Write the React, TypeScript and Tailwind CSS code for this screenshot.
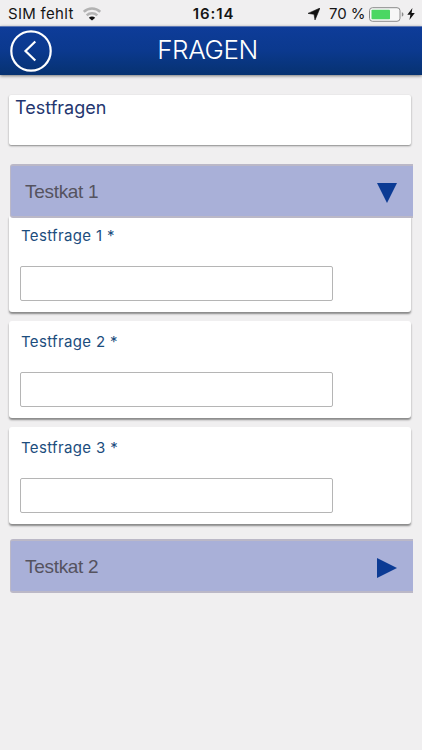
import React from 'react';

interface Question {
  id: number;
  label: string;
}

const QUESTIONS: Question[] = [
  { id: 1, label: 'Testfrage 1 *' },
  { id: 2, label: 'Testfrage 2 *' },
  { id: 3, label: 'Testfrage 3 *' },
];

const StatusBar: React.FC = () => (
  <div className="grid h-[26px] grid-cols-[1fr_auto_1fr] items-center pt-[2px] text-[15px] leading-[20px] text-[#151515]">
    <div className="flex items-center pl-2">
      <span className="w-[66px] whitespace-nowrap tracking-[0.3px]">SIM fehlt</span>
      <svg className="ml-[9px] h-[14px] w-[18px]" viewBox="0 0 18 14" fill="none">
        <path d="M0.8 4.8C5.3 0.3 12.7 0.3 17.2 4.8" stroke="#b3b3b3" strokeWidth="2.5" />
        <path d="M3.7 8.3C6.6 5.5 11.4 5.5 14.3 8.3" stroke="#b3b3b3" strokeWidth="2.5" />
        <path d="M9 13.4L5.8 10.7C7.6 9.1 10.4 9.1 12.2 10.7Z" fill="#111" />
      </svg>
    </div>
    <span className="ml-[5px] font-semibold tracking-[0.9px]">16:14</span>
    <div className="flex items-center justify-end pr-[7px]">
      <svg className="mr-[9px] h-[12px] w-[12px]" viewBox="0 0 12 12">
        <path d="M12 0L7 12L6 6.3L0 5.4Z" fill="#111" stroke="#111" strokeWidth="0.6" />
      </svg>
      <span className="w-[37px] whitespace-nowrap tracking-[-0.1px]">70 %</span>
      <svg className="ml-[3px] h-[15px] w-[36px]" viewBox="0 0 36 15">
        <rect x="0.5" y="0.7" width="30.5" height="13.6" rx="3" fill="#f7f7f7" stroke="#8b8b8b" />
        <rect x="2.5" y="2.8" width="18.5" height="9.4" rx="0.8" fill="#4bd763" />
        <path d="M32.8 5.3C35 5.8 35 9.2 32.8 9.7Z" fill="#8b8b8b" />
      </svg>
      <svg className="ml-[2px] h-[12px] w-[8px]" viewBox="0 0 8 12">
        <path d="M5.4 0L0.3 6.8H3.4L2.4 12L7.8 4.9H4.6Z" fill="#111" />
      </svg>
    </div>
  </div>
);

const Header: React.FC = () => (
  <header className="grid h-[49px] grid-cols-[52px_1fr_59px] items-center border-t border-[#5d78b4] bg-linear-to-b from-[#0e3c99] via-[#0b398e] to-[#073271] shadow-[0_1px_3px_#777]">
    <button type="button" aria-label="Zurück" className="ml-[10px] h-[42px] w-[42px]">
      <svg viewBox="0 0 42 42" fill="none" stroke="#fff">
        <circle cx="21" cy="21" r="19.7" strokeWidth="2.2" />
        <path d="M25.3 11.5L15.5 21L25.3 30.5" strokeWidth="2.2" />
      </svg>
    </button>
    <h1 className="-mt-[2px] text-center text-[26px] leading-[40px] font-light tracking-[-0.4px] text-white">FRAGEN</h1>
  </header>
);

interface CategoryProps {
  title: string;
  open?: boolean;
}

const Category: React.FC<CategoryProps> = ({ title, open = false }) => (
  <div className="relative z-10 -mr-[2px] ml-px flex h-[54px] items-center justify-between rounded-l-[3px] border-y-2 border-l border-[#bbb8c7] bg-[#a9b0d8] pr-[16px] pl-[14px]">
    <span className="pt-px text-[19px] leading-6 tracking-[-0.3px] text-[#55535f] font-['Liberation_Sans',Arial,sans-serif]">
      {title}
    </span>
    <svg className="mt-[3px] h-5 w-5" viewBox="0 0 20 20" fill="#0c3b94">
      {open ? <path d="M0 0H20L10 20Z" /> : <path d="M0 0L20 10L0 20Z" />}
    </svg>
  </div>
);

const QuestionCard: React.FC<{ question: Question }> = ({ question }) => (
  <div className="h-[97px] rounded-[3px] bg-white px-[11px] pt-[11px] shadow-[0_2px_2px_#888]">
    <label htmlFor={`question-${question.id}`} className="ml-px block text-[15px] leading-[20px] tracking-[0.35px] text-[#1c4d7d]">
      {question.label}
    </label>
    <input
      id={`question-${question.id}`}
      type="text"
      className="mt-[20px] block h-[35px] w-[313px] rounded-[2px] border border-[#b5b5b5] bg-white px-2 text-[15px]"
    />
  </div>
);

const App: React.FC = () => {
  return (
    <div className="min-h-screen bg-[#f0eff0] font-[Inter,'Liberation_Sans',sans-serif]">
      <StatusBar />
      <Header />
      <main className="pt-5 pr-[11px] pl-[9px]">
        <div className="h-[50px] rounded-[2px] bg-white px-[6px] pt-px text-[18px] leading-6 text-[#24366f] shadow-[0_1px_2px_#888]">
          Testfragen
        </div>
        <div className="mt-[19px]">
          <Category title="Testkat 1" open />
          <div className="-mt-[3px] flex flex-col gap-[9px]">
            {QUESTIONS.map((question) => (
              <QuestionCard key={question.id} question={question} />
            ))}
          </div>
        </div>
        <div className="mt-[15px]">
          <Category title="Testkat 2" />
        </div>
      </main>
    </div>
  );
};

export default App;
